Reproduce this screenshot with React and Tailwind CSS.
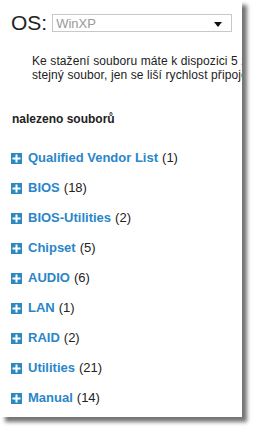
import { useState } from 'react';

const CATEGORIES = [
  { name: 'Qualified Vendor List', count: 1 },
  { name: 'BIOS', count: 18 },
  { name: 'BIOS-Utilities', count: 2 },
  { name: 'Chipset', count: 5 },
  { name: 'AUDIO', count: 6 },
  { name: 'LAN', count: 1 },
  { name: 'RAID', count: 2 },
  { name: 'Utilities', count: 21 },
  { name: 'Manual', count: 14 },
];

const PlusIcon = () => (
  <span className="w-[11px] h-[11px] bg-[#2b88c0] flex items-center justify-center shrink-0">
    <svg width="9" height="9" viewBox="0 0 9 9">
      <rect x="3.5" y="0.5" width="2" height="8" fill="#fff" />
      <rect x="0.5" y="3.5" width="8" height="2" fill="#fff" />
    </svg>
  </span>
);

const App = () => {
  const [os] = useState('WinXP');

  return (
    <div className="min-h-screen bg-white font-['Liberation_Sans',Arial,sans-serif]">
      <div className="w-[242px] h-[417px] bg-white overflow-hidden shadow-[5px_5px_4px_rgba(0,0,0,0.55)]">
        <div className="flex items-center pt-[12px] pl-[11px]">
          <span className="text-[21px] leading-[22px] text-[#222]">OS:</span>
          <div className="ml-[5px] w-[180px] h-[18px] border border-[#c8c8c8] flex items-center justify-between px-[3px]">
            <span className="text-[13px] leading-none text-[#9a9a9a]">{os}</span>
            <svg width="8" height="5" viewBox="0 0 8 5" className="mr-[6px] mt-[2px]">
              <path d="M0 0 H8 L4 5 Z" fill="#111" />
            </svg>
          </div>
        </div>

        <p className="mt-[20px] ml-[32px] w-[320px] whitespace-nowrap text-[12px] leading-[14px] tracking-[0.1px] text-[#222]">
          Ke stažení souboru máte k dispozici 5 zrcadel. Všechny obsahují
          <br />
          stejný soubor, jen se liší rychlost připojení.
        </p>

        <h3 className="mt-[28px] ml-[12px] text-[12px] font-bold text-[#222]">nalezeno souborů</h3>

        <ul className="mt-[23px] ml-[11px] flex flex-col gap-[16px]">
          {CATEGORIES.map((cat) => (
            <li key={cat.name} className="flex items-center h-[14px] text-[13px]">
              <PlusIcon />
              <a className="ml-[6px] font-bold text-[#2a86c8]">{cat.name}</a>
              <span className="ml-[4px] text-[#222]">({cat.count})</span>
            </li>
          ))}
        </ul>
      </div>
    </div>
  );
};

export default App;
